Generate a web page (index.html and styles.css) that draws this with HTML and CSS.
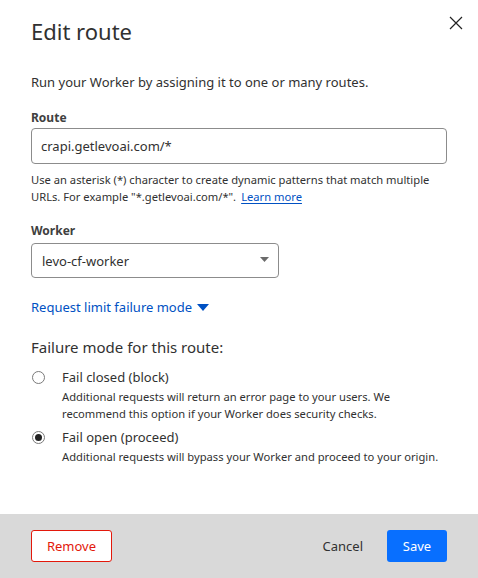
FILE: index.html
```html
<!DOCTYPE html>
<html>
<head>
<meta charset="utf-8">
<link rel="stylesheet" href="styles.css">
</head>
<body>
<div class="modal">
  <div class="content">
    <div class="header">
      <h1 class="title">Edit route</h1>
      <button class="close" aria-label="Close">
        <svg width="14" height="14" viewBox="0 0 14 14"><path d="M1 1L13 13M13 1L1 13" stroke="#222" stroke-width="1.2" fill="none"/></svg>
      </button>
    </div>
    <p class="intro">Run your Worker by assigning it to one or many routes.</p>

    <label class="field-label">Route</label>
    <div class="input">crapi.getlevoai.com/*</div>
    <p class="help"><span>Use an asterisk (*) character to create dynamic patterns that match multiple</span><br><span>URLs. For example "*.getlevoai.com/*".</span><a class="help-link">Learn more</a></p>

    <label class="field-label worker-label">Worker</label>
    <div class="select">
      <span>levo-cf-worker</span>
      <svg class="caret" width="9" height="5" viewBox="0 0 9 5"><path d="M0 0H9L4.5 5Z" fill="#6b6b6b"/></svg>
    </div>

    <a class="toggle">Request limit failure mode
      <svg class="toggle-caret" width="12" height="7" viewBox="0 0 12 7"><path d="M0 0H12L6 7Z" fill="#0051c3"/></svg>
    </a>

    <h2 class="section">Failure mode for this route:</h2>

    <div class="option">
      <span class="radio"></span>
      <div class="option-text">
        <div class="option-title">Fail closed (block)</div>
        <div class="option-desc">Additional requests will return an error page to your users. We<br>recommend this option if your Worker does security checks.</div>
      </div>
    </div>
    <div class="option">
      <span class="radio checked"></span>
      <div class="option-text">
        <div class="option-title">Fail open (proceed)</div>
        <div class="option-desc">Additional requests will bypass your Worker and proceed to your origin.</div>
      </div>
    </div>
  </div>
  <div class="footer">
    <button class="btn-remove">Remove</button>
    <div class="actions">
      <button class="btn-cancel">Cancel</button>
      <button class="btn-save">Save</button>
    </div>
  </div>
</div>
</body>
</html>
```

FILE: styles.css
```css
* { box-sizing: border-box; }
html, body { margin: 0; padding: 0; background: #fff; }
body {
  font-family: "Noto Sans", "Open Sans", sans-serif;
  color: #313131;
  width: 478px;
  height: 578px;
  overflow: hidden;
}
.modal {
  width: 478px;
  height: 578px;
  display: flex;
  flex-direction: column;
}
.content {
  flex: 1;
  padding: 0 31px;
  display: flex;
  flex-direction: column;
  align-items: flex-start;
}
.header {
  width: 100%;
  display: flex;
  justify-content: space-between;
  align-items: flex-start;
  height: 64px;
}
.title {
  margin: 16px 0 0;
  font-size: 22px;
  font-weight: 400;
  line-height: 30px;
  color: #313131;
}
.close {
  border: 0;
  background: none;
  padding: 0;
  margin: 16px -16px 0 0;
  width: 14px;
  height: 14px;
  display: flex;
}
.intro {
  margin: 9px 0 0;
  font-size: 13px;
  line-height: 18px;
}
.field-label {
  display: block;
  margin-top: 19px;
  font-size: 12px;
  font-weight: 700;
  line-height: 16px;
  color: #404040;
}
.input {
  margin-top: 2px;
  width: 100%;
  height: 36px;
  border: 1px solid #8c8c8c;
  border-radius: 4px;
  padding: 0 9px;
  display: flex;
  align-items: center;
  font-size: 13px;
}
.help {
  margin: 7px 0 0;
  font-size: 11.2px;
  line-height: 17px;
  width: 415px;
  white-space: nowrap;
}
.help-link {
  display: inline-block;
  margin-left: 5px;
  line-height: 14px;
  color: #0051c3;
  text-decoration: underline;
  text-underline-offset: 2px;
}
.worker-label { margin-top: 18px; }
.select {
  margin-top: 4px;
  width: 248px;
  height: 35px;
  border: 1px solid #8c8c8c;
  border-radius: 4px;
  padding: 0 9px 0 10px;
  display: flex;
  align-items: center;
  justify-content: space-between;
  font-size: 13px;
}
.caret { margin-top: -2px; }
.toggle {
  margin-top: 20px;
  color: #0051c3;
  font-size: 13px;
  line-height: 18px;
  display: flex;
  align-items: center;
  gap: 5px;
}
.toggle-caret { margin-top: 1px; }
.section {
  margin: 21px 0 0;
  font-size: 15px;
  font-weight: 400;
  line-height: 20px;
  color: #313131;
}
.option {
  display: flex;
  align-items: flex-start;
  margin-top: 11px;
}
.option + .option { margin-top: 6px; }
.radio {
  width: 13px;
  height: 13px;
  border: 1px solid #7a7a7a;
  border-radius: 50%;
  margin: 3px 0 0 1px;
  flex: none;
  display: flex;
  align-items: center;
  justify-content: center;
}
.radio.checked::after {
  content: "";
  width: 7px;
  height: 7px;
  border-radius: 50%;
  background: #222;
}
.option-text { margin-left: 17px; }
.option-title {
  font-size: 13px;
  line-height: 18px;
}
.option-desc {
  margin-top: 2px;
  font-size: 11.2px;
  line-height: 17px;
  width: 395px;
}
.footer {
  height: 64px;
  background: #d9d9d9;
  padding: 0 31px;
  display: flex;
  align-items: center;
  justify-content: space-between;
  flex: none;
}
button { font-family: inherit; cursor: pointer; }
.btn-remove {
  width: 81px;
  height: 32px;
  background: #fff;
  border: 1px solid #e3180b;
  border-radius: 3px;
  color: #e3180b;
  font-size: 13px;
}
.actions {
  display: flex;
  align-items: center;
  gap: 24px;
}
.btn-cancel {
  border: 0;
  background: none;
  color: #313131;
  font-size: 13px;
  padding: 0;
}
.btn-save {
  width: 60px;
  height: 32px;
  background: #086fff;
  border: 0;
  border-radius: 3px;
  color: #fff;
  font-size: 13px;
}
```
